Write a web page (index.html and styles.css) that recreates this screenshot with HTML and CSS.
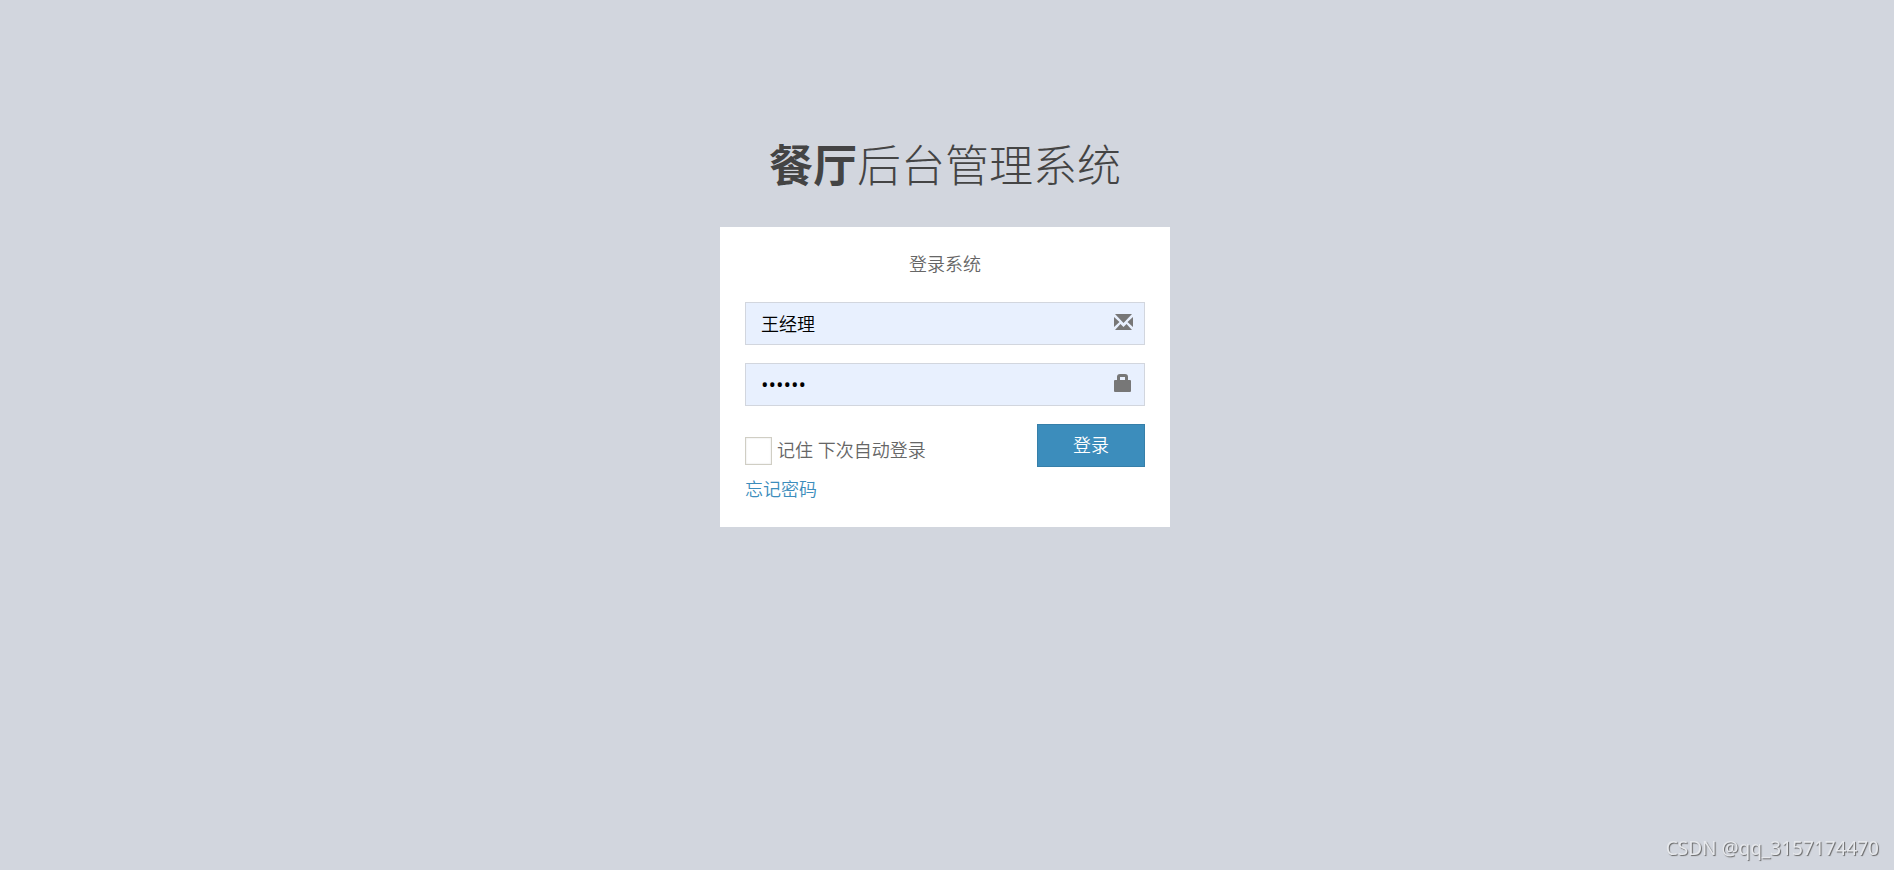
FILE: index.html
```html
<!DOCTYPE html>
<html lang="zh-CN">
<head>
    <meta charset="UTF-8">
    <meta name="viewport" content="width=device-width, initial-scale=1.0">
    <title>餐厅后台管理系统</title>
    <link rel="stylesheet" href="styles.css">
</head>
<body>

    <div class="login-box">
        <h1 class="login-logo"><b>餐厅</b>后台管理系统</h1>

        <div class="login-box-body">
            <p class="login-box-msg">登录系统</p>

            <form>
                <div class="form-group">
                    <input type="text" class="form-control" name="username" aria-label="用户名" value="王经理">
                    <svg class="feedback" viewBox="0 0 20 18" aria-hidden="true">
                        <path d="M1 1h17l-8.5 9zM0 4l5.5 5L0 14zM19 4l-5.500 5 5.500 5zM1 17l5.500-6 3 3 3-3 5.500 6z"/>
                    </svg>
                </div>
                <div class="form-group">
                    <input type="password" class="form-control password" name="password" aria-label="密码" value="123456">
                    <svg class="feedback" viewBox="0 0 20 18" aria-hidden="true">
                        <path fill-rule="evenodd" d="M3 6V3q0-3 3-3h5q3 0 3 3v3h2q1 0 1 1v10q0 1-1 1H1q-1 0-1-1V7q0-1 1-1zM6 6h5V3H6z"/>
                    </svg>
                </div>
                <div class="row">
                    <div class="checkbox">
                        <input type="checkbox" id="remember" name="remember">
                        <label for="remember">记住 下次自动登录</label>
                    </div>
                    <button type="submit" class="btn">登录</button>
                </div>
            </form>

            <a href="#" class="forgot">忘记密码</a>
        </div>
    </div>

    <div class="watermark">CSDN @qq_3157174470</div>

</body>
</html>
```

FILE: styles.css
```css
* {
    margin: 0;
    padding: 0;
    box-sizing: border-box;
}

body {
    min-height: 100vh;
    padding-right: 4px;
    background-color: #d2d6de;
    color: #666;
    font-family: "Open Sans", "Noto Sans CJK SC", sans-serif;
    font-size: 18px;
    font-weight: 350;
    line-height: 25px;
}

.login-box {
    width: 450px;
    max-width: 100%;
    margin: 0 auto;
    padding-top: 7vw;
}

.login-logo {
    margin-bottom: 30px;
    color: #444;
    font-size: 44px;
    font-weight: 300;
    line-height: 64px;
    text-align: center;
}

.login-logo b {
    font-weight: 700;
}

.login-box-body {
    padding: 25px;
    background-color: white;
}

.login-box-msg {
    margin-bottom: 25px;
    text-align: center;
}

.form-group {
    position: relative;
    margin-bottom: 18px;
}

.form-control {
    display: block;
    width: 100%;
    height: 43px;
    padding: 8px 15px;
    border: 1px solid #d2d6de;
    background-color: #e8f0fe;
    color: black;
    font: inherit;
}

.password {
    font-size: 20px;
    font-weight: 500;
}

.feedback {
    position: absolute;
    top: 11px;
    right: 11px;
    width: 20px;
    height: 18px;
    fill: #777;
}

.row {
    display: flex;
    justify-content: space-between;
    align-items: flex-start;
}

.checkbox {
    display: flex;
    align-items: center;
    gap: 5px;
    padding-top: 13px;
}

.checkbox input {
    appearance: none;
    width: 27px;
    height: 28px;
    border: 1px solid #d0cec4;
    background-color: white;
    box-shadow: inset 0 0 2px #ddd;
}

.btn {
    width: 108px;
    height: 43px;
    border: 1px solid #367fa9;
    background-color: #3c8dbc;
    color: white;
    font: inherit;
    cursor: pointer;
}

.forgot {
    display: block;
    width: max-content;
    margin-top: 10px;
    color: #3c8dbc;
    text-decoration: none;
}

/* Text in the bottom right corner */
.watermark {
    position: fixed;
    right: 15px;
    bottom: 9px;
    color: #e6e8ec;
    font-family: "Noto Sans", sans-serif;
    font-size: 19px;
    font-weight: 400;
    text-shadow: 1px 1px 1px #666;
}
```
